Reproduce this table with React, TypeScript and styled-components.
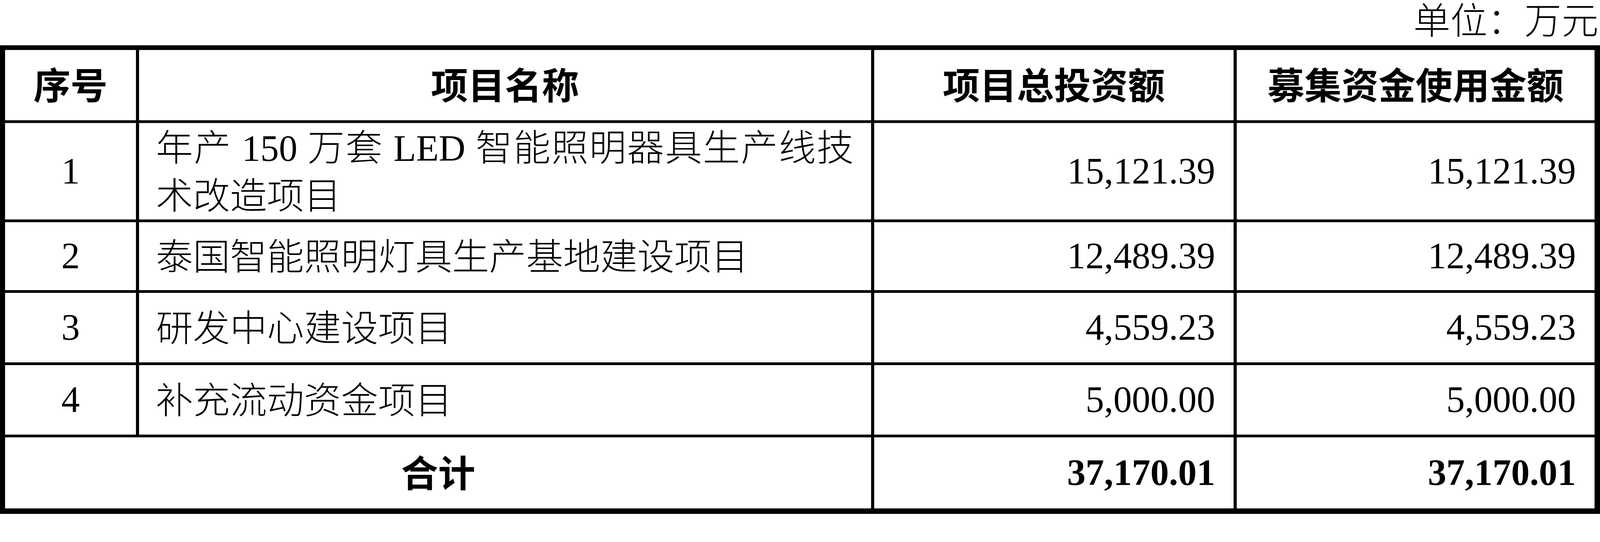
import React from "react";
import styled, { createGlobalStyle } from "styled-components";

// All sizes are expressed in reference pixels and scaled to the viewport width,
// so the 4320px-wide design fits the frame whatever the CSS viewport size is.
const u = (n: number) => `calc(${n} * var(--u))`;

const GlobalStyle = createGlobalStyle`
  :root {
    --u: calc(100vw / 4320);
  }
  html, body {
    margin: 0;
    padding: 0;
    background: #ffffff;
    overflow: hidden;
  }
`;

const Page = styled.div`
  width: 100vw;
  height: ${u(1388)};
  display: flex;
  flex-direction: column;
  background: #ffffff;
  color: #000000;
`;

const Caption = styled.div`
  height: ${u(122)};
  flex: none;
  box-sizing: border-box;
  padding: 0 ${u(4)} ${u(4)} 0;
  display: flex;
  align-items: center;
  justify-content: flex-end;
  font-family: "Liberation Serif", "Noto Sans CJK SC", serif;
  font-size: ${u(100)};
  font-weight: 300;
  line-height: ${u(110)};
  white-space: nowrap;
`;

const Grid = styled.div`
  display: grid;
  grid-template-columns: ${u(353)} ${u(1977)} ${u(971)} 1fr;
  grid-template-rows: ${u(190)} ${u(261)} ${u(184)} ${u(188)} ${u(188)} ${u(192)};
  gap: ${u(7)} ${u(8)};
  padding: ${u(13)} ${u(15)} ${u(15)} ${u(14)};
  background: #000000;
`;

const HeadCell = styled.div`
  background: #ffffff;
  display: flex;
  align-items: center;
  justify-content: center;
  box-sizing: border-box;
  padding-bottom: ${u(10)};
  font-family: "Noto Sans CJK SC", sans-serif;
  font-weight: 700;
  font-size: ${u(100)};
  line-height: ${u(120)};
  white-space: nowrap;
`;

const IndexCell = styled.div`
  background: #ffffff;
  display: flex;
  align-items: center;
  justify-content: center;
  font-family: "Liberation Serif", "Noto Sans CJK SC", serif;
  font-size: ${u(100)};
  line-height: ${u(120)};
`;

const NameCell = styled.div`
  background: #ffffff;
  display: flex;
  align-items: center;
  box-sizing: border-box;
  padding: ${u(8)} ${u(47)} 0 ${u(46)};
`;

const NameText = styled.div`
  width: 100%;
  font-family: "Liberation Serif", "Noto Sans CJK SC", serif;
  font-size: ${u(100)};
  font-weight: 300;
  line-height: ${u(130)};
  text-align: justify;
  text-align-last: left;
`;

const AmountCell = styled.div<{ $bold?: boolean }>`
  background: #ffffff;
  display: flex;
  align-items: center;
  justify-content: flex-end;
  box-sizing: border-box;
  padding-right: ${u(50)};
  font-family: "Liberation Serif", serif;
  font-size: ${u(100)};
  font-weight: ${(p) => (p.$bold ? 700 : 400)};
  line-height: ${u(120)};
  white-space: nowrap;
`;

const TotalLabel = styled.div`
  grid-column: span 2;
  background: #ffffff;
  display: flex;
  align-items: center;
  justify-content: center;
  box-sizing: border-box;
  padding-bottom: ${u(10)};
  font-family: "Noto Sans CJK SC", sans-serif;
  font-weight: 700;
  font-size: ${u(100)};
  line-height: ${u(120)};
`;

type Row = { idx: string; name: string; total: string; raised: string };

const rows: Row[] = [
  {
    idx: "1",
    name: "年产 150 万套 LED 智能照明器具生产线技术改造项目",
    total: "15,121.39",
    raised: "15,121.39",
  },
  {
    idx: "2",
    name: "泰国智能照明灯具生产基地建设项目",
    total: "12,489.39",
    raised: "12,489.39",
  },
  { idx: "3", name: "研发中心建设项目", total: "4,559.23", raised: "4,559.23" },
  { idx: "4", name: "补充流动资金项目", total: "5,000.00", raised: "5,000.00" },
];

const headers = ["序号", "项目名称", "项目总投资额", "募集资金使用金额"];

export default function App() {
  return (
    <>
      <GlobalStyle />
      <Page>
        <Caption>单位：万元</Caption>
        <Grid>
          {headers.map((h) => (
            <HeadCell key={h}>{h}</HeadCell>
          ))}
          {rows.map((r) => (
            <React.Fragment key={r.idx}>
              <IndexCell>{r.idx}</IndexCell>
              <NameCell>
                <NameText>{r.name}</NameText>
              </NameCell>
              <AmountCell>{r.total}</AmountCell>
              <AmountCell>{r.raised}</AmountCell>
            </React.Fragment>
          ))}
          <TotalLabel>合计</TotalLabel>
          <AmountCell $bold>37,170.01</AmountCell>
          <AmountCell $bold>37,170.01</AmountCell>
        </Grid>
      </Page>
    </>
  );
}
